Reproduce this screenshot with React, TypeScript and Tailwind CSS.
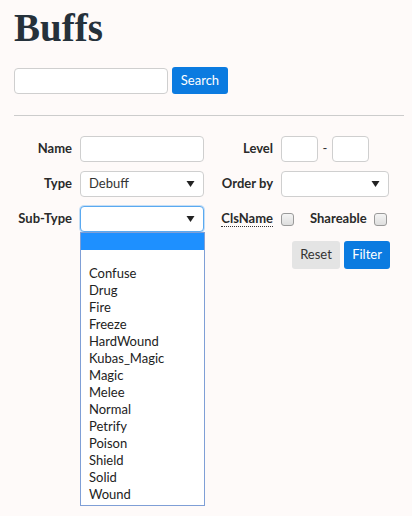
import React from "react";

const subTypes = [
  "Confuse",
  "Drug",
  "Fire",
  "Freeze",
  "HardWound",
  "Kubas_Magic",
  "Magic",
  "Melee",
  "Normal",
  "Petrify",
  "Poison",
  "Shield",
  "Solid",
  "Wound",
];

const Caret = () => (
  <svg width="9" height="7" viewBox="0 0 9 7" className="absolute right-[8px] top-1/2 -translate-y-1/2">
    <polygon points="0.5,0.5 8.5,0.5 4.5,6.5" fill="#222" />
  </svg>
);

const FakeSelect = ({
  value,
  width,
  focused,
  children,
}: {
  value?: string;
  width: string;
  focused?: boolean;
  children?: React.ReactNode;
}) => (
  <div
    className={`relative h-[26px] ${width} rounded-[4px] border bg-white ${
      focused ? "border-[#5aa9f0] shadow-[0_0_0_1px_rgba(90,169,240,0.35)]" : "border-[#cfcfcf]"
    }`}
  >
    <span className="absolute left-[8px] top-1/2 -translate-y-1/2 text-[13px] text-[#333]">{value}</span>
    <Caret />
    {children}
  </div>
);

const Checkbox = () => (
  <span className="inline-block h-[13px] w-[13px] rounded-[3px] border border-[#9a9a9a] bg-gradient-to-b from-[#f4f4f4] to-[#dedede]" />
);

const Label = ({ children }: { children: React.ReactNode }) => (
  <label className="text-right text-[13px] font-bold text-[#2a2a2a]">{children}</label>
);

export default function App() {
  return (
    <div className="min-h-[516px] w-full bg-[#fefaf9] pl-[14px] pr-[8px] font-['Segoe_UI','Lato',sans-serif] text-[#222]">
      <h1 className="pt-[8px] font-['Liberation_Serif',serif] text-[39px] font-bold leading-none text-[#25313b]">
        Buffs
      </h1>

      <div className="mt-[20px] flex items-center gap-[4px]">
        <input className="h-[26px] w-[154px] rounded-[4px] border border-[#cfcfcf] bg-white" />
        <button className="h-[27px] w-[56px] rounded-[3px] bg-[#0b7be0] text-[13px] text-white">Search</button>
      </div>

      <hr className="mt-[21px] border-0 border-t border-[#cccccc]" />

      <div className="mt-[20px] flex items-start gap-[11px]">
        <div className="grid grid-cols-[58px_124px] content-start items-center gap-x-[8px] gap-y-[9px]">
          <Label>Name</Label>
          <input className="h-[26px] w-[124px] rounded-[4px] border border-[#cfcfcf] bg-white" />

          <Label>Type</Label>
          <FakeSelect value="Debuff" width="w-[124px]" />

          <Label>Sub-Type</Label>
          <FakeSelect width="w-[124px]" focused>
            <div className="absolute left-[-1px] top-[25px] z-10 w-[125px] border border-[#7f9fd6] bg-white pb-[2px]">
              <div className="h-[17px] bg-[#1e90ff]" />
              <div className="h-[15px]" />
              {subTypes.map((s) => (
                <div key={s} className="flex h-[17px] items-center pl-[8px] text-[13px] text-[#222]">
                  {s}
                </div>
              ))}
            </div>
          </FakeSelect>
        </div>

        <div className="grid grid-cols-[58px_auto] content-start items-center gap-x-[8px] gap-y-[9px]">
          <Label>Level</Label>
          <div className="flex items-center">
            <input className="h-[26px] w-[37px] rounded-[4px] border border-[#cfcfcf] bg-white" />
            <span className="w-[14px] text-center text-[13px] text-[#333]">-</span>
            <input className="h-[26px] w-[37px] rounded-[4px] border border-[#cfcfcf] bg-white" />
          </div>

          <Label>Order by</Label>
          <FakeSelect width="w-[108px]" />

          <div className="flex h-[26px] items-center justify-end">
            <abbr className="border-b border-dotted border-[#333] text-[13px] font-bold leading-[15px] text-[#2a2a2a] no-underline">
              ClsName
            </abbr>
          </div>
          <div className="flex items-center">
            <Checkbox />
            <span className="ml-[16px] text-[13px] font-bold text-[#2a2a2a]">Shareable</span>
            <span className="ml-[7px] flex">
              <Checkbox />
            </span>
          </div>

          <div />
          <div className="flex w-[109px] justify-end gap-[4px]">
            <button className="h-[28px] w-[48px] rounded-[3px] bg-[#e4e4e4] text-[13px] text-[#333]">Reset</button>
            <button className="h-[28px] w-[46px] rounded-[3px] bg-[#0b7be0] text-[13px] text-white">Filter</button>
          </div>
        </div>
      </div>
    </div>
  );
}
